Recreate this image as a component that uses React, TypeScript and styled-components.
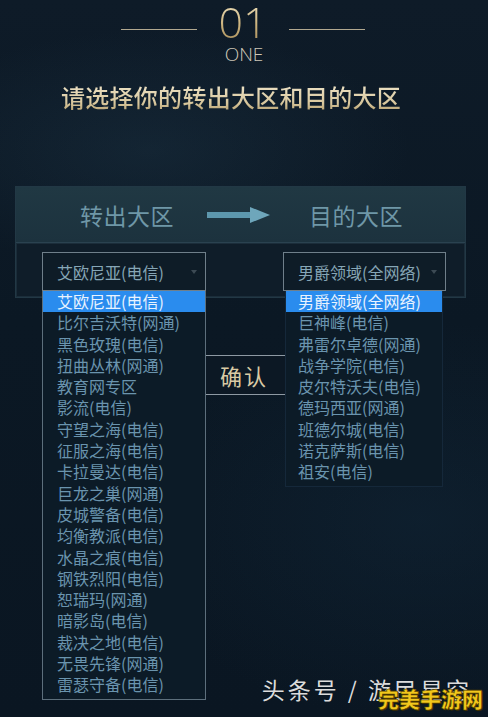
import * as React from 'react';
import styled, { createGlobalStyle } from 'styled-components';

const GlobalStyle = createGlobalStyle`
    html, body {
        margin: 0;
        padding: 0;
        background: #0b1723;
    }
    body {
        font-family: "Noto Sans CJK SC", "Noto Sans", sans-serif;
    }
`;

const Page = styled.div`
    position: relative;
    width: 488px;
    height: 717px;
    overflow: hidden;
    background:
        radial-gradient(ellipse 260px 120px at 150px 150px, rgba(40, 70, 90, 0.25), transparent),
        radial-gradient(ellipse 300px 200px at 420px 520px, rgba(20, 45, 65, 0.35), transparent),
        linear-gradient(180deg, #0e1b28 0%, #0b1824 45%, #0a1622 100%);
    color: #8fb0c2;
`;

const Heading = styled.div`
    display: flex;
    flex-direction: column;
    align-items: center;
`;

const NumberRow = styled.div`
    display: flex;
    align-items: center;
    gap: 21px;
    margin-left: -2px;
`;

const Rule = styled.span`
    display: block;
    width: 76px;
    height: 1px;
    background: #b1a890;
    margin-top: 15px;
`;

const Number = styled.div`
    font-family: "Open Sans", "Noto Sans", sans-serif;
    font-weight: 300;
    font-size: 43px;
    line-height: 43px;
    background: linear-gradient(180deg, #f1e4c1 0%, #c9b07a 60%, #a88e5c 100%);
    -webkit-background-clip: text;
    background-clip: text;
    color: transparent;
`;

const Caption = styled.div`
    font-family: "Open Sans", "Noto Sans", sans-serif;
    font-weight: 300;
    font-size: 19px;
    line-height: 22px;
    color: #cfc8b8;
`;

const Title = styled.h1`
    margin: 17px 0 0 -26px;
    font-size: 24px;
    line-height: 30px;
    font-weight: 500;
    letter-spacing: 0.3px;
    background: linear-gradient(180deg, #f0e6cc 0%, #d8c79d 70%, #b59e6e 100%);
    -webkit-background-clip: text;
    background-clip: text;
    color: transparent;
`;

const Panel = styled.section`
    margin: 74px 22px 0 15px;
    border: 1px solid #223845;
`;

const PanelHeader = styled.div`
    display: flex;
    align-items: center;
    height: 55px;
    padding-left: 64px;
    background: linear-gradient(180deg, #203843 0%, #1c323e 100%);
    border-bottom: 1px solid #2a4250;
`;

const ZoneLabel = styled.span`
    font-size: 23px;
    line-height: 30px;
    color: #6f97a7;
    letter-spacing: 0.5px;
`;

const ArrowWrap = styled.span`
    display: flex;
    margin: 0 39px 0 33px;
`;

const PanelBody = styled.div`
    display: flex;
    align-items: flex-start;
    gap: 77px;
    height: 54px;
    padding: 9px 0 0 26px;
    box-sizing: border-box;
    background: #0f1d29;
    box-shadow: inset 0 0 0 1px #1b2d3a;
`;

const SelectWrap = styled.div`
    position: relative;
`;

interface SelectBoxProps {
    readonly width: number;
}

const SelectBox = styled.div<SelectBoxProps>`
    display: flex;
    align-items: center;
    justify-content: space-between;
    width: ${(p) => p.width}px;
    height: 39px;
    box-sizing: border-box;
    padding: 0 8px 0 14px;
    border: 1px solid #6f7f8a;
    background: #0e1c27;
    font-size: 16px;
    color: #86a6b6;
`;

const Caret = styled.span`
    width: 0;
    height: 0;
    border-left: 3px solid transparent;
    border-right: 3px solid transparent;
    border-top: 4px solid #3c4a54;
`;

interface ListProps {
    readonly width: number;
    readonly framed?: boolean;
}

const OptionList = styled.ul<ListProps>`
    position: absolute;
    top: 39px;
    left: ${(p) => (p.framed ? 0 : 2)}px;
    z-index: 2;
    width: ${(p) => p.width}px;
    margin: 0;
    padding: 0 0 3px;
    box-sizing: border-box;
    list-style: none;
    background: #0c1b27;
    border: 1px solid ${(p) => (p.framed ? '#5d6f7c' : '#15283a')};
    border-top: none;
`;

interface OptionProps {
    readonly selected?: boolean;
    readonly indent: number;
}

const Option = styled.li<OptionProps>`
    height: 21.3px;
    line-height: 21.3px;
    padding-left: ${(p) => p.indent}px;
    font-size: 16px;
    white-space: nowrap;
    color: ${(p) => (p.selected ? '#e8f3ff' : '#6a94ae')};
    background: ${(p) => (p.selected ? '#2a8cee' : 'transparent')};
`;

const ConfirmButton = styled.button`
    display: block;
    width: 180px;
    height: 40px;
    margin: 57px 0 0 154px;
    padding: 0;
    border: none;
    border-top: 1px solid #8e99a3;
    border-bottom: 1px solid #8e99a3;
    background: #0c1824;
    font-family: "Noto Sans CJK SC", sans-serif;
    font-size: 22px;
    letter-spacing: 2px;
    color: #d9caa4;
`;

const Watermark = styled.div`
    position: absolute;
    right: 16px;
    bottom: 11px;
    font-size: 23px;
    letter-spacing: 3px;
    color: #dcdcdc;
    white-space: nowrap;
`;

const Stamp = styled.span`
    position: absolute;
    right: 5px;
    bottom: 4px;
    font-size: 21px;
    font-weight: 900;
    color: #f2c81c;
    -webkit-text-stroke: 0.6px #5a4300;
    text-shadow: 1px 1px 0 #3b2c00;
`;

const sourceZones = [
    '艾欧尼亚(电信)',
    '比尔吉沃特(网通)',
    '黑色玫瑰(电信)',
    '扭曲丛林(网通)',
    '教育网专区',
    '影流(电信)',
    '守望之海(电信)',
    '征服之海(电信)',
    '卡拉曼达(电信)',
    '巨龙之巢(网通)',
    '皮城警备(电信)',
    '均衡教派(电信)',
    '水晶之痕(电信)',
    '钢铁烈阳(电信)',
    '恕瑞玛(网通)',
    '暗影岛(电信)',
    '裁决之地(电信)',
    '无畏先锋(网通)',
    '雷瑟守备(电信)',
];

const targetZones = [
    '男爵领域(全网络)',
    '巨神峰(电信)',
    '弗雷尔卓德(网通)',
    '战争学院(电信)',
    '皮尔特沃夫(电信)',
    '德玛西亚(网通)',
    '班德尔城(电信)',
    '诺克萨斯(电信)',
    '祖安(电信)',
];

function Arrow() {
    return (
        <svg width="63" height="16" viewBox="0 0 63 16">
            <rect x="0" y="5" width="46" height="6" fill="#5d97ad" />
            <polygon points="43,0 63,8 43,16" fill="#6ea6bb" />
        </svg>
    );
}

export default function App() {
    return (
        <Page>
            <GlobalStyle />
            <Heading>
                <NumberRow>
                    <Rule />
                    <Number>01</Number>
                    <Rule />
                </NumberRow>
                <Caption>ONE</Caption>
                <Title>请选择你的转出大区和目的大区</Title>
            </Heading>

            <Panel>
                <PanelHeader>
                    <ZoneLabel>转出大区</ZoneLabel>
                    <ArrowWrap>
                        <Arrow />
                    </ArrowWrap>
                    <ZoneLabel>目的大区</ZoneLabel>
                </PanelHeader>
                <PanelBody>
                    <SelectWrap>
                        <SelectBox width={164}>
                            {sourceZones[0]}
                            <Caret />
                        </SelectBox>
                        <OptionList width={164} framed={true}>
                            {sourceZones.map((zone, i) => (
                                <Option key={zone} selected={i === 0} indent={14}>{zone}</Option>
                            ))}
                        </OptionList>
                    </SelectWrap>
                    <SelectWrap>
                        <SelectBox width={163}>
                            {targetZones[0]}
                            <Caret />
                        </SelectBox>
                        <OptionList width={158}>
                            {targetZones.map((zone, i) => (
                                <Option key={zone} selected={i === 0} indent={12}>{zone}</Option>
                            ))}
                        </OptionList>
                    </SelectWrap>
                </PanelBody>
            </Panel>

            <ConfirmButton>确认</ConfirmButton>

            <Watermark>头条号 / 游民星空</Watermark>
            <Stamp>完美手游网</Stamp>
        </Page>
    );
}
